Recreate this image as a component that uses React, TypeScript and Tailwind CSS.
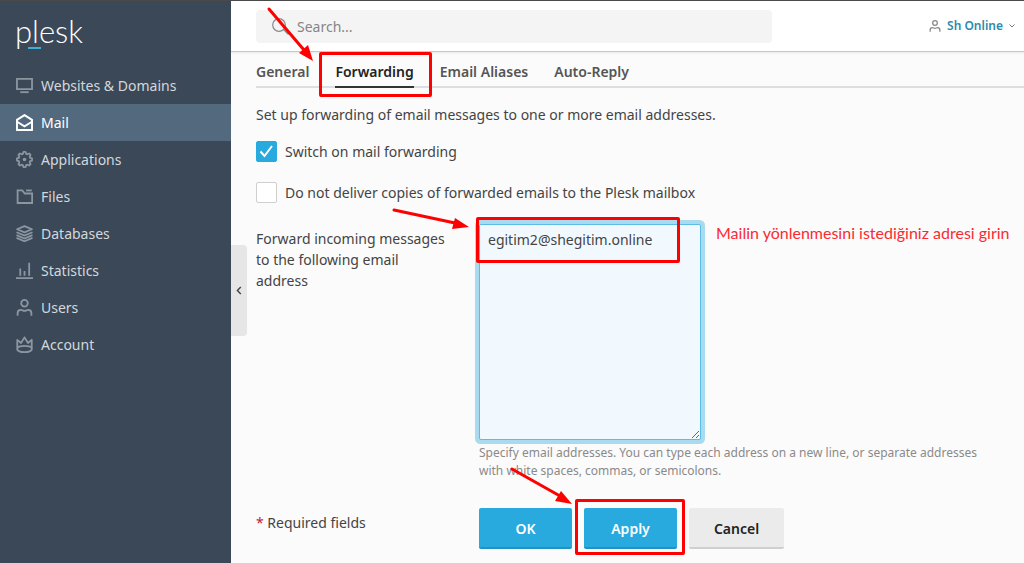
import React, { useState } from 'react';
import clsx from 'clsx';

type IconProps = { className?: string };

const Svg: React.FC<IconProps & { children: React.ReactNode }> = ({ className = 'size-[17px]', children }) => (
  <svg viewBox="0 0 16 16" className={className} fill="none" stroke="currentColor" strokeWidth="1.7" aria-hidden="true">
    {children}
  </svg>
);

const ScreenIcon = () => (
  <Svg>
    <path d="M.9 1.700h14.200v9.800H.9z" />
    <path d="M4 14.300h8" />
  </Svg>
);

const MailIcon = () => (
  <Svg>
    <path d="M.9 5.600 8 1l7.100 4.600v9.500H.9z" strokeLinejoin="round" strokeWidth="1.900" />
    <path d="m1 7.300 7 4.300 7-4.300" strokeWidth="1.900" />
  </Svg>
);

const GearIcon = () => (
  <Svg>
    <path d="m6.400 2.700.6-1.800h2l.6 1.800 1 .4 1.700-.8 1.400 1.400-.8 1.700.4 1 1.800.6v2l-1.800.6-.4 1 .8 1.700-1.400 1.400-1.700-.8-1 .4-.6 1.800H7l-.6-1.800-1-.4-1.700.8-1.400-1.400.8-1.700-.4-1L.9 9V7l1.800-.6.4-1-.8-1.700 1.400-1.400 1.700.8z" strokeLinejoin="round" />
    <circle cx="8" cy="8" r="1.700" fill="currentColor" stroke="none" />
  </Svg>
);

const FolderIcon = () => (
  <Svg>
    <path d="M1.500 2.300h4.400l2.400 2.900h6.900v8.900H1.500z" />
    <path d="M9.500 2.300h5.300" />
  </Svg>
);

const LayersIcon = () => (
  <Svg>
    <path d="M8 1 15 4 8 7 1 4z" strokeLinejoin="round" />
    <path d="m.5 6.800 7.500 3.200 7.500-3.200M.5 9.500 8 12.700l7.500-3.200M.5 12.100 8 15.300l7.500-3.200" />
  </Svg>
);

const ChartIcon = () => (
  <Svg>
    <path d="M0 15.200h16M4 13V6.200M8 13V8.500M12.400 13V.8" />
  </Svg>
);

const UserIcon: React.FC<IconProps> = ({ className }) => (
  <Svg className={className}>
    <circle cx="8" cy="4" r="3.100" />
    <path d="M1.500 15.800v-2.300c0-2 1.300-3.200 3-3.200 1.400 0 2 .8 3.500.8s2.100-.8 3.500-.8c1.700 0 3 1.200 3 3.200v2.300" />
  </Svg>
);

const CrownIcon = () => (
  <Svg>
    <path d="M1.200 13V3.600l3.500 3L8 1.300l3.300 5.300 3.500-3V13c-1.800 3-11.800 3-13.600 0z" strokeLinejoin="round" />
    <path d="M1.200 11.300c2.300-2.600 11.300-2.600 13.600 0" />
  </Svg>
);

const navItems = [
  { label: 'Websites & Domains', Icon: ScreenIcon },
  { label: 'Mail', Icon: MailIcon, active: true },
  { label: 'Applications', Icon: GearIcon },
  { label: 'Files', Icon: FolderIcon },
  { label: 'Databases', Icon: LayersIcon },
  { label: 'Statistics', Icon: ChartIcon },
  { label: 'Users', Icon: UserIcon },
  { label: 'Account', Icon: CrownIcon },
];

const tabs = ['General', 'Forwarding', 'Email Aliases', 'Auto-Reply'];

/* red frame and arrow drawn over the part it points at */
const Frame: React.FC<{ className: string }> = ({ className }) => (
  <span className={clsx('absolute rounded-xs border-3 border-[#fe0000] pointer-events-none z-10', className)} />
);

const Arrow: React.FC<{ className: string; w: number; h: number; line: string; head: string }> = ({ className, w, h, line, head }) => (
  <svg viewBox={`0 0 ${w} ${h}`} width={w} height={h} className={clsx('absolute pointer-events-none z-10 max-w-none', className)} aria-hidden="true">
    <path d={line} stroke="#fe0000" strokeWidth="3" strokeLinecap="round" />
    <path d={head} fill="#fe0000" />
  </svg>
);

const Sidebar = () => (
  <aside className="relative w-[231px] shrink-0 bg-[#3a4858]">
    <a href="#" className="relative ml-[15px] mt-[10px] flex h-10 w-fit items-center font-['Lato',sans-serif] text-[31px] font-light text-white">
      plesk
      <span className="absolute left-[13px] top-[36px] h-[2px] w-[13px] bg-[#3fb0d3]" />
    </a>
    <nav className="mt-4">
      {navItems.map(({ label, Icon, active }) => (
        <a
          key={label}
          href="#"
          className={clsx(
            'flex h-[37px] items-center gap-2 pl-4',
            active ? 'bg-[#53697d] text-white' : 'text-[#d3d8dc]'
          )}
        >
          <span className={active ? 'text-white' : 'text-[#8c96a0]'}>
            <Icon />
          </span>
          {label}
        </a>
      ))}
    </nav>
    <button type="button" aria-label="Collapse menu" className="absolute left-full top-[244px] flex h-[91px] w-4 items-center justify-center rounded-r bg-[#e6e6e6]">
      <svg viewBox="0 0 6 10" className="h-[9px] w-[6px]" fill="none" stroke="#444" strokeWidth="1.600">
        <path d="M5 1 1.200 5 5 9" />
      </svg>
    </button>
  </aside>
);

const Header = () => (
  <header className="flex h-[51px] items-center justify-between border-b border-[#c8c8c8] bg-white pl-[25px] pr-[9px] shadow-[0_1px_2px_rgba(0,0,0,0.08)]">
    <label className="flex h-[33px] max-w-[516px] flex-1 items-center gap-2 rounded bg-[#f4f4f4] pl-4">
      <svg viewBox="0 0 17 17" className="size-[17px]" fill="none" stroke="#888" strokeWidth="1.200" aria-hidden="true">
        <circle cx="7" cy="7" r="6.300" />
        <path d="m11.500 11.500 5 5" />
      </svg>
      <input type="search" aria-label="Search" placeholder="Search..." className="min-w-0 flex-1 bg-transparent outline-none placeholder:text-[#858585]" />
    </label>
    <button type="button" className="flex items-center gap-[6px] text-xs font-semibold text-[#2b8bab]">
      <span className="text-[#888]">
        <UserIcon className="size-3" />
      </span>
      Sh Online
      <svg viewBox="0 0 6 4" className="h-[4px] w-[6px]" fill="none" stroke="#777" aria-hidden="true">
        <path d="m.5.500 2.500 2.500L5.500.5" />
      </svg>
    </button>
  </header>
);

const CheckRow: React.FC<{ label: string; checked: boolean; onChange: (v: boolean) => void }> = ({ label, checked, onChange }) => (
  <label className="flex w-fit items-center gap-2">
    <span className="relative flex size-[21px]">
      <input
        type="checkbox"
        checked={checked}
        onChange={e => onChange(e.target.checked)}
        className="size-[21px] appearance-none rounded-xs border border-[#cfcfcf] bg-white checked:border-[#28aade] checked:bg-[#28aade]"
      />
      {checked && (
        <svg viewBox="0 0 21 21" className="pointer-events-none absolute inset-0" fill="none" stroke="#fff" strokeWidth="2" aria-hidden="true">
          <path d="m4.500 10.500 4 4.500L16 5" />
        </svg>
      )}
    </span>
    {label}
  </label>
);

export default function App() {
  const [forwarding, setForwarding] = useState(true);
  const [noCopies, setNoCopies] = useState(false);
  const [addresses, setAddresses] = useState('egitim2@shegitim.online');

  return (
    <div className="flex min-h-screen overflow-hidden border-t border-[#4a4a4a] bg-[#fbfbfb] font-['Noto_Sans','Open_Sans',sans-serif] text-sm leading-[21px] text-[#444]">
      <Sidebar />
      <div className="min-w-0 flex-1">
        <Header />
        <main className="pl-[25px]">
          {/* Tabs */}
          <nav className="flex gap-[26px] border-b-2 border-[#dedede] pt-[9px] font-semibold text-[#555]">
            {tabs.map(tab => (
              <a
                key={tab}
                href="#"
                className={clsx('relative -mb-[2px] border-b-2 pb-1', tab === 'Forwarding' ? 'border-[#333] text-[#222]' : 'border-transparent')}
              >
                {tab}
                {tab === 'Forwarding' && (
                  <>
                    <Frame className="-left-4 -right-[18px] -top-[9px] -bottom-[11px]" />
                    <Arrow className="-left-[69px] -top-[56px]" w={50} h={58} line="M3 4 38 45" head="M47 56 33 48l9-8z" />
                  </>
                )}
              </a>
            ))}
          </nav>

          <form onSubmit={e => e.preventDefault()}>
            <p className="mt-4">Set up forwarding of email messages to one or more email addresses.</p>
            <div className="mt-4 flex flex-col gap-5">
              <CheckRow label="Switch on mail forwarding" checked={forwarding} onChange={setForwarding} />
              <CheckRow label="Do not deliver copies of forwarded emails to the Plesk mailbox" checked={noCopies} onChange={setNoCopies} />
            </div>

            <div className="mt-[21px] flex">
              <label htmlFor="addresses" className="w-[223px] shrink-0 pr-7 pt-1">
                Forward incoming messages to the following email address
              </label>
              <div className="min-w-0 flex-1">
                <div className="relative flex gap-[15px]">
                  <textarea
                    id="addresses"
                    value={addresses}
                    onChange={e => setAddresses(e.target.value)}
                    className="block h-[216px] w-[222px] shrink-0 rounded-xs border border-[#5bbce5] bg-[#f1f9ff] px-2 py-1 shadow-[0_0_0_4px_#a8dbf0] outline-none"
                  />
                  <Frame className="-left-[3px] -top-[7px] h-[46px] w-[204px]" />
                  <Arrow className="-left-[88px] -top-[18px]" w={80} h={26} line="M3 4 64 17" head="M78 21 61 23l3-11z" />
                  <p className="-mt-[2px] font-['Lato',sans-serif] text-base leading-[21px] text-[#fb2a32]">Mailin yönlenmesini istediğiniz adresi girin</p>
                </div>
                <p className="mt-1 pr-6 text-xs leading-[18px] text-[#8a8a8a]">
                  Specify email addresses. You can type each address on a new line, or separate addresses with white spaces, commas, or semicolons.
                </p>
              </div>
            </div>

            <div className="mt-7 flex items-start pb-3 font-semibold">
              <p className="w-[223px] shrink-0 pt-1 font-normal">
                <span className="text-[#c4183c]">*</span> Required fields
              </p>
              <div className="flex gap-3">
                <button type="submit" className="h-[41px] w-[93px] rounded-xs border-b-2 border-[#2193c3] bg-[#28aade] pt-px text-white">OK</button>
                <span className="relative">
                  <button type="button" className="h-[41px] w-[93px] rounded-xs border-b-2 border-[#2193c3] bg-[#28aade] pt-px text-white">Apply</button>
                  <Frame className="-left-[9px] -right-2 -top-[9px] -bottom-[6px]" />
                  <Arrow className="-left-[76px] -top-[43px]" w={66} h={42} line="M4 4 52 31" head="M64 39 47 36l6-10z" />
                </span>
                <button type="button" className="h-[41px] w-[95px] rounded-xs border-b-2 border-[#cfcfcf] bg-[#ebebeb] pt-px text-[#222]">Cancel</button>
              </div>
            </div>
          </form>
        </main>
      </div>
    </div>
  );
}
